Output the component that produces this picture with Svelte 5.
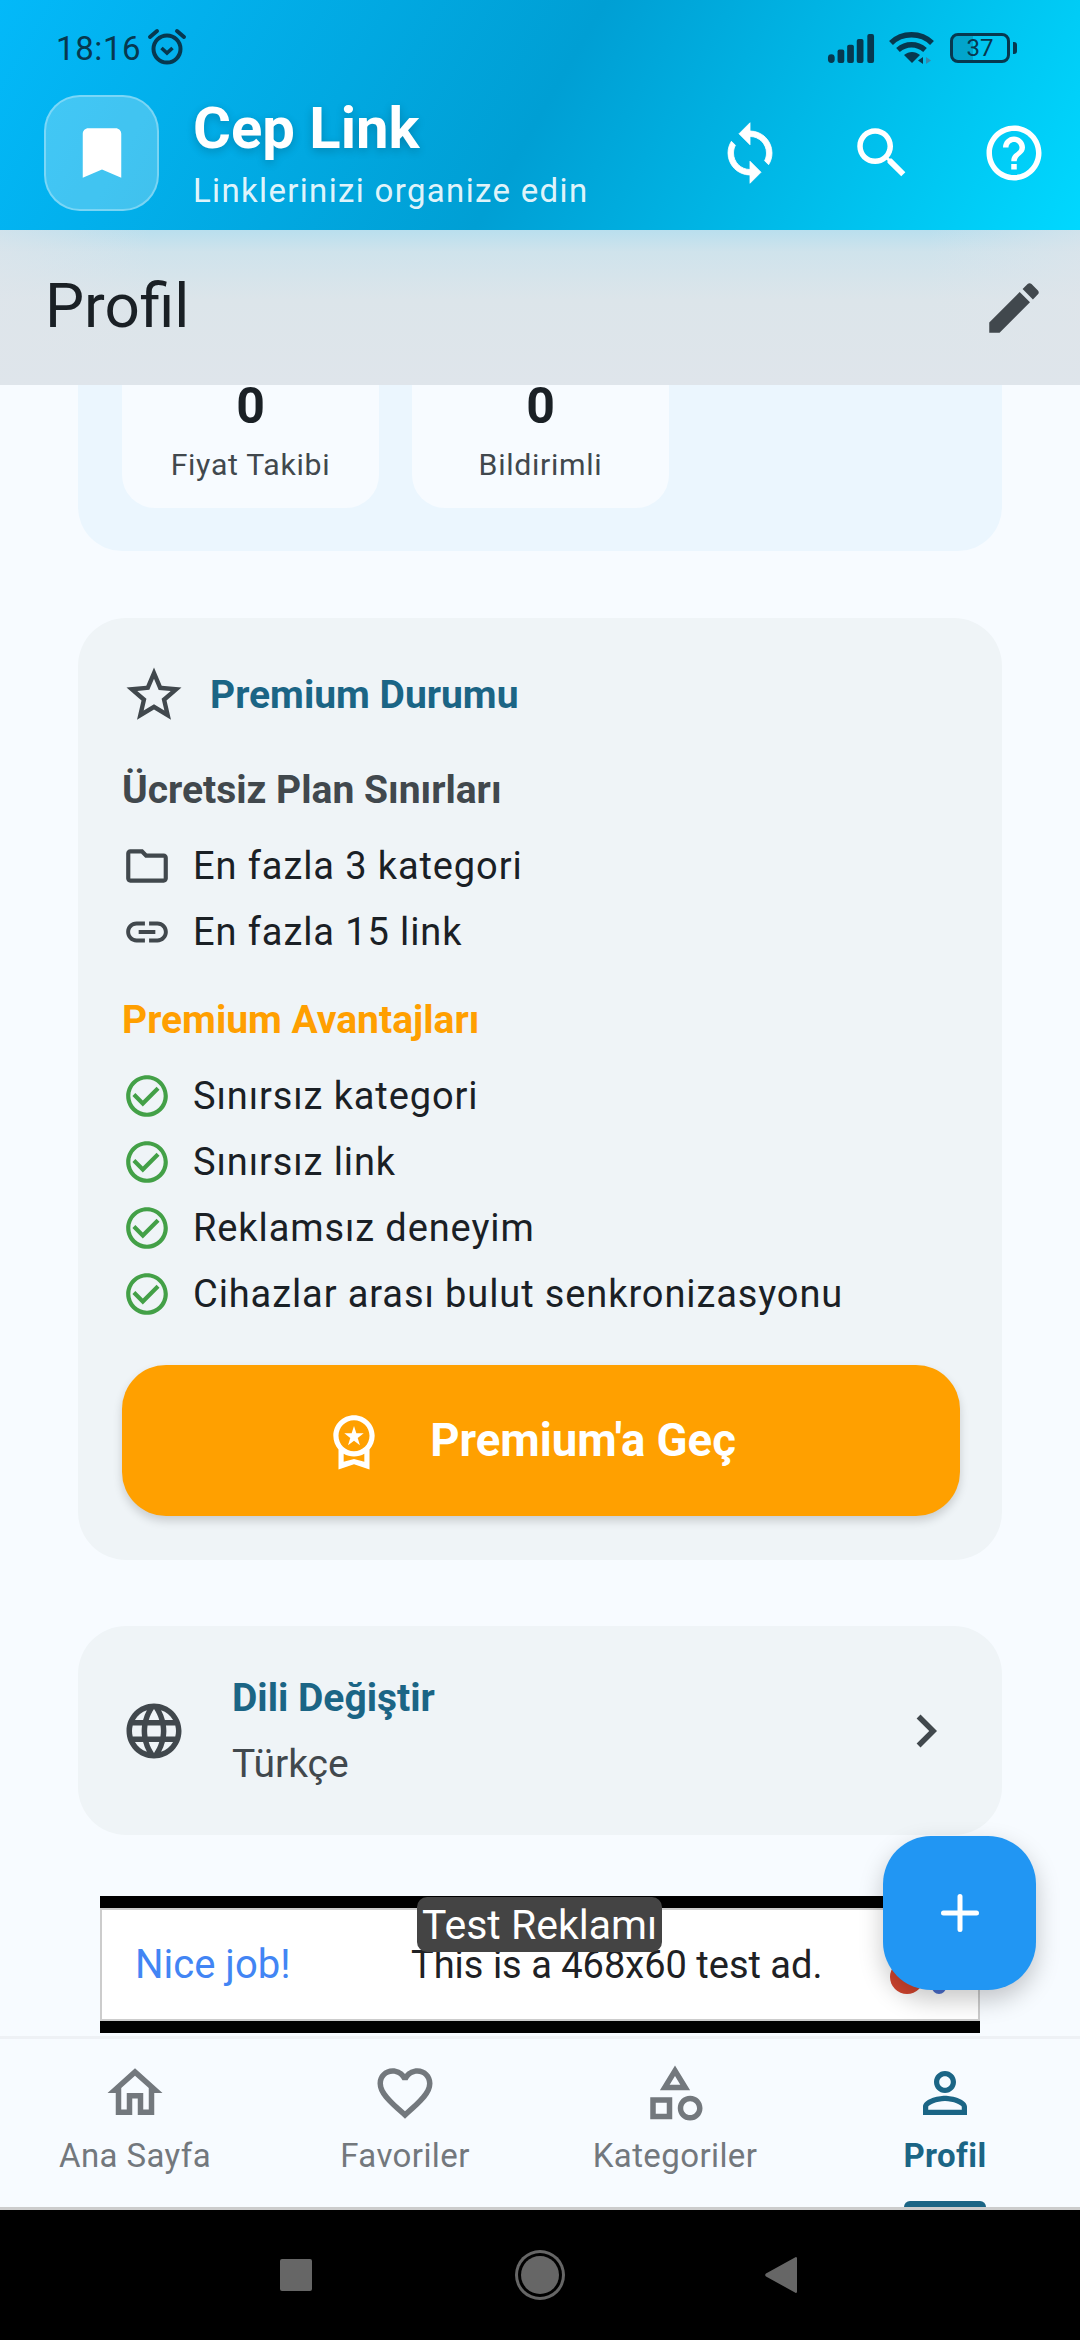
<script>
  const limits = [
    { icon: 'folder', text: 'En fazla 3 kategori' },
    { icon: 'link', text: 'En fazla 15 link' }
  ]
  const perks = ['Sınırsız kategori', 'Sınırsız link', 'Reklamsız deneyim', 'Cihazlar arası bulut senkronizasyonu']
  const stats = [
    { value: 0, label: 'Fiyat Takibi' },
    { value: 0, label: 'Bildirimli' }
  ]

  const paths = {
    folder: 'M9.17 6l2 2H20v10H4V6h5.17M10 4H4c-1.1 0-1.99.9-1.99 2L2 18c0 1.1.9 2 2 2h16c1.1 0 2-.9 2-2V8c0-1.1-.9-2-2-2h-8l-2-2z',
    link: 'M3.9 12c0-1.71 1.39-3.1 3.1-3.1h4V7H7c-2.76 0-5 2.24-5 5s2.24 5 5 5h4v-1.9H7c-1.71 0-3.1-1.39-3.1-3.1zM8 13h8v-2H8v2zm9-6h-4v1.9h4c1.71 0 3.1 1.39 3.1 3.1s-1.39 3.1-3.1 3.1h-4V17h4c2.76 0 5-2.24 5-5s-2.24-5-5-5z',
    check: 'M16.59 7.58L10 14.17l-3.59-3.58L5 12l5 5 8-8zM12 2C6.48 2 2 6.48 2 12s4.48 10 10 10 10-4.48 10-10S17.52 2 12 2zm0 18c-4.42 0-8-3.58-8-8s3.58-8 8-8 8 3.58 8 8-3.58 8-8 8z',
    home: 'M12 5.69l5 4.5V18h-2v-6H9v6H7v-7.81l5-4.5M12 3L2 12h3v8h6v-6h2v6h6v-8h3L12 3z',
    heart: 'M16.5 3c-1.74 0-3.41.81-4.5 2.09C10.91 3.81 9.24 3 7.5 3 4.42 3 2 5.42 2 8.5c0 3.78 3.4 6.86 8.55 11.54L12 21.35l1.45-1.32C18.6 15.36 22 12.28 22 8.5 22 5.42 19.58 3 16.5 3zm-4.4 15.55l-.1.1-.1-.1C7.14 14.24 4 11.39 4 8.5 4 6.5 5.5 5 7.5 5c1.54 0 3.04.99 3.57 2.36h1.87C13.46 5.99 14.96 5 16.5 5c2 0 3.5 1.5 3.5 3.5 0 2.89-3.14 5.74-7.9 10.05z',
    category: 'M12 2l-5.5 9h11L12 2zm0 3.84L13.93 9h-3.87L12 5.84zM17.5 13c-2.49 0-4.5 2.01-4.5 4.5s2.01 4.5 4.5 4.5 4.5-2.01 4.5-4.5-2.01-4.5-4.5-4.5zm0 7c-1.38 0-2.5-1.12-2.5-2.5s1.12-2.5 2.5-2.5 2.5 1.12 2.5 2.5-1.12 2.5-2.5 2.5zM3 21.5h8v-8H3v8zm2-6h4v4H5v-4z',
    person: 'M12 5.9c1.16 0 2.1.94 2.1 2.1s-.94 2.1-2.1 2.1S9.9 9.16 9.9 8s.94-2.1 2.1-2.1m0 9c2.97 0 6.1 1.46 6.1 2.1v1.1H5.9V17c0-.64 3.13-2.1 6.1-2.1M12 4C9.79 4 8 5.79 8 8s1.79 4 4 4 4-1.79 4-4-1.79-4-4-4zm0 9c-2.67 0-8 1.34-8 4v3h16v-3c0-2.66-5.33-4-8-4z',
    sync: 'M12 4V1L8 5l4 4V6c3.31 0 6 2.69 6 6 0 1.01-.25 1.97-.7 2.8l1.46 1.46C19.54 15.03 20 13.57 20 12c0-4.42-3.58-8-8-8zm0 14c-3.31 0-6-2.69-6-6 0-1.01.25-1.97.7-2.8L5.24 7.74C4.46 8.97 4 10.43 4 12c0 4.42 3.58 8 8 8v3l4-4-4-4v3z',
    search: 'M15.5 14h-.79l-.28-.27C15.41 12.59 16 11.11 16 9.5 16 5.91 13.09 3 9.5 3S3 5.91 3 9.5 5.91 16 9.5 16c1.61 0 3.09-.59 4.23-1.57l.27.28v.79l5 4.99L20.49 19l-4.99-5zm-6 0C7.01 14 5 11.99 5 9.5S7.01 5 9.5 5 14 7.01 14 9.5 11.99 14 9.5 14z',
    help: 'M11 18h2v-2h-2v2zm1-16C6.48 2 2 6.48 2 12s4.48 10 10 10 10-4.48 10-10S17.52 2 12 2zm0 18c-4.41 0-8-3.59-8-8s3.59-8 8-8 8 3.59 8 8-3.59 8-8 8zm0-14c-2.21 0-4 1.79-4 4h2c0-1.1.9-2 2-2s2 .9 2 2c0 2-3 1.75-3 5h2c0-2.25 3-2.5 3-5 0-2.21-1.79-4-4-4z',
    edit: 'M3 17.25V21h3.75L17.81 9.94l-3.75-3.75L3 17.25zM20.71 7.04c.39-.39.39-1.02 0-1.41l-2.34-2.34c-.39-.39-1.02-.39-1.41 0l-1.83 1.83 3.75 3.75 1.83-1.83z',
    star: 'M22 9.24l-7.19-.62L12 2 9.19 8.63 2 9.24l5.46 4.73L5.82 21 12 17.27 18.18 21l-1.63-7.03L22 9.24zM12 15.4l-3.76 2.27 1-4.28-3.32-2.88 4.38-.38L12 6.1l1.71 4.04 4.38.38-3.32 2.88 1 4.28L12 15.4z',
    globe: 'M11.99 2C6.47 2 2 6.48 2 12s4.47 10 9.99 10C17.52 22 22 17.52 22 12S17.52 2 11.99 2zm6.93 6h-2.95c-.32-1.25-.78-2.45-1.38-3.56 1.84.63 3.37 1.91 4.33 3.56zM12 4.04c.83 1.2 1.48 2.53 1.91 3.96h-3.82c.43-1.43 1.08-2.76 1.91-3.96zM4.26 14C4.1 13.36 4 12.69 4 12s.1-1.36.26-2h3.38c-.08.66-.14 1.32-.14 2 0 .68.06 1.34.14 2H4.26zm.82 2h2.95c.32 1.25.78 2.45 1.38 3.56-1.84-.63-3.37-1.9-4.33-3.56zm2.95-8H5.08c.96-1.66 2.49-2.93 4.33-3.56C8.81 5.55 8.35 6.75 8.03 8zM12 19.96c-.83-1.2-1.48-2.53-1.91-3.96h3.82c-.43 1.43-1.08 2.76-1.91 3.96zM14.34 14H9.66c-.09-.66-.16-1.32-.16-2 0-.68.07-1.35.16-2h4.68c.09.65.16 1.32.16 2 0 .68-.07 1.34-.16 2zm.25 5.56c.6-1.11 1.06-2.31 1.38-3.56h2.95c-.96 1.65-2.49 2.93-4.33 3.56zM16.36 14c.08-.66.14-1.32.14-2 0-.68-.06-1.34-.14-2h3.38c.16.64.26 1.31.26 2s-.1 1.36-.26 2h-3.38z',
    chevron: 'M10 6L8.59 7.41 13.17 12l-4.58 4.59L10 18l6-6z',
    medal: 'M9.68 13.69L12 11.93l2.31 1.76-.88-2.85L15.75 9h-2.84L12 6.19 11.09 9H8.25l2.31 1.84-.88 2.85zM20 10c0-4.42-3.58-8-8-8s-8 3.58-8 8c0 2.03.76 3.87 2 5.28V23l6-2 6 2v-7.72c1.24-1.41 2-3.25 2-5.28zm-8-6c3.31 0 6 2.69 6 6s-2.69 6-6 6-6-2.69-6-6 2.69-6 6-6zm0 15l-4 1.02v-3.1c1.18.68 2.54 1.08 4 1.08s2.82-.4 4-1.08v3.1L12 19z',
    bookmark: 'M17 3H7c-1.1 0-2 .9-2 2v16l7-3 7 3V5c0-1.1-.9-2-2-2z'
  }

  const tabs = [
    { icon: 'home', label: 'Ana Sayfa' },
    { icon: 'heart', label: 'Favoriler' },
    { icon: 'category', label: 'Kategoriler' },
    { icon: 'person', label: 'Profil', active: true }
  ]
</script>

<div class="screen">
  <header class="top">
    <div class="status">
      <span class="time">18:16</span>
      <svg class="alarm" viewBox="0 0 40 40" width="40" height="40">
        <circle cx="20" cy="22" r="13.5" fill="none" stroke="#07384f" stroke-width="4"/>
        <path d="M14.5 21l5.500 5 5.500-5" fill="none" stroke="#07384f" stroke-width="3.600"/>
        <path d="M3 10l7-6M37 10l-7-6" fill="none" stroke="#07384f" stroke-width="4" stroke-linecap="round"/>
      </svg>
      <span class="spacer"></span>
      <svg viewBox="0 0 50 32" width="48" height="31">
        <g fill="#07384f">
          <rect x="1" y="22" width="7" height="9" rx="3.500"/>
          <rect x="11" y="17" width="7" height="14" rx="2"/>
          <rect x="21" y="12" width="7" height="19" rx="2"/>
          <rect x="31" y="6" width="7" height="25" rx="2"/>
          <rect x="42" y="1" width="7" height="30" rx="2"/>
        </g>
      </svg>
      <svg class="wifi" viewBox="0 0 48 36" width="48" height="36">
        <g fill="none" stroke="#07384f" stroke-width="5.500">
          <path d="M3 13C14 2 33 2 44 13"/>
          <path d="M10 20c8-7 19-7 27 0"/>
        </g>
        <path d="M16 25c5-4 11-4 16 0l-8 8z" fill="#07384f"/>
        <path d="M35 34v-7l-5 3.500z" fill="#07384f"/>
        <path d="M38 27v7l5-3.500z" fill="#3b87a8"/>
      </svg>
      <div class="battery">
        <div class="battery-fill"></div>
        <span>37</span>
      </div>
      <div class="battery-tip"></div>
    </div>

    <div class="brand-row">
      <div class="logo">
        <svg viewBox="0 0 24 24" width="66" height="66"><path d={paths.bookmark} fill="#fff"/></svg>
      </div>
      <div class="brand">
        <h1>Cep Link</h1>
        <p>Linklerinizi organize edin</p>
      </div>
      <button class="icon-btn">
        <svg viewBox="0 0 24 24" width="66" height="66"><path d={paths.sync} fill="#fff" stroke="#fff" stroke-width=".3" stroke-linejoin="round"/></svg>
      </button>
      <button class="icon-btn">
        <svg viewBox="0 0 24 24" width="66" height="66"><path d={paths.search} fill="#fff"/></svg>
      </button>
      <button class="icon-btn">
        <svg viewBox="0 0 24 24" width="66" height="66"><path d={paths.help} fill="#fff"/></svg>
      </button>
    </div>
  </header>

  <div class="app-bar">
    <h2>Profil</h2>
    <svg viewBox="0 0 24 24" width="66" height="66"><path d={paths.edit} fill="#41484d"/></svg>
  </div>

  <main class="content">
    <section class="stats-card">
      <div class="stats">
        {#each stats as s}
          <div class="tile">
            <strong>{s.value}</strong>
            <span>{s.label}</span>
          </div>
        {/each}
      </div>
    </section>

    <section class="card premium">
      <div class="card-head">
        <svg viewBox="0 0 24 24" width="66" height="66"><path d={paths.star} fill="#41484d"/></svg>
        <h3>Premium Durumu</h3>
      </div>

      <h4 class="limits-title">Ücretsiz Plan Sınırları</h4>
      <ul>
        {#each limits as item}
          <li>
            <svg viewBox="0 0 24 24" width="50" height="50"><path d={paths[item.icon]} fill="#41484d"/></svg>
            {item.text}
          </li>
        {/each}
      </ul>

      <h4 class="perks-title">Premium Avantajları</h4>
      <ul>
        {#each perks as perk}
          <li>
            <svg viewBox="0 0 24 24" width="50" height="50"><path d={paths.check} fill="#43a047"/></svg>
            {perk}
          </li>
        {/each}
      </ul>

      <button class="cta">
        <svg viewBox="0 0 24 24" width="62" height="62"><path d={paths.medal} fill="#fff"/></svg>
        Premium'a Geç
      </button>
    </section>

    <section class="card lang">
      <svg viewBox="0 0 24 24" width="66" height="66"><path d={paths.globe} fill="#41484d"/></svg>
      <div class="lang-text">
        <h3>Dili Değiştir</h3>
        <span>Türkçe</span>
      </div>
      <svg viewBox="0 0 24 24" width="66" height="66"><path d={paths.chevron} fill="#41484d"/></svg>
    </section>

    <div class="ad">
      <div class="ad-inner">
        <span class="nice">Nice job!</span>
        <span class="ad-copy">This is a 468x60 test ad.</span>
        <span class="dot red"></span>
        <span class="dot blue"></span>
      </div>
      <span class="test-badge">Test Reklamı</span>
    </div>
  </main>

  <nav class="tabs">
    {#each tabs as tab}
      <div class="tab" class:active={tab.active}>
        <svg viewBox="0 0 24 24" width="66" height="66"><path d={paths[tab.icon]} fill="currentColor"/></svg>
        <span>{tab.label}</span>
        {#if tab.active}<i class="indicator"></i>{/if}
      </div>
    {/each}
  </nav>

  <div class="sys-nav">
    <span class="sys-square"></span>
    <span class="sys-circle"></span>
    <svg viewBox="0 0 32 36" width="32" height="36"><path d="M32 1v34a1 1 0 0 1-1.600.700L1 19.500a2 2 0 0 1 0-3L30.400.300A1 1 0 0 1 32 1z" fill="#666"/></svg>
  </div>

  <button class="fab">
    <svg viewBox="0 0 38 38" width="38" height="38"><path d="M19 2.500v33M2.500 19h33" stroke="#fff" stroke-width="5" stroke-linecap="round"/></svg>
  </button>
</div>

<style>
  :global(body) {
    margin: 0;
    background: #f7fbff;
  }

  .screen {
    position: relative;
    width: 1080px;
    height: 2340px;
    overflow: hidden;
    display: flex;
    flex-direction: column;
    font-family: Roboto, "Noto Sans", sans-serif;
    background: #f7fbff;
    color: #1a2025;
  }

  h1, h2, h3, h4, p, ul {
    margin: 0;
    padding: 0;
  }

  svg {
    display: block;
    flex: none;
  }

  button {
    border: 0;
    padding: 0;
    background: none;
    font-family: inherit;
  }

  .top {
    height: 230px;
    flex: none;
    box-sizing: border-box;
    background: linear-gradient(120deg, #03b9f9 0%, #009fd4 50%, #00d8ff 100%);
  }

  .status {
    height: 87px;
    box-sizing: border-box;
    padding: 9px 63px 0 56px;
    display: flex;
    align-items: center;
    color: #07384f;
  }

  .time {
    font-size: 33px;
    letter-spacing: 0.6px;
  }

  .alarm {
    margin-left: 6px;
    margin-top: -3px;
  }

  .spacer {
    flex: 1;
  }

  .wifi {
    margin: 0 14px 0 13px;
  }

  .battery {
    position: relative;
    width: 60px;
    height: 30px;
    box-sizing: border-box;
    border: 3.500px solid #07384f;
    border-radius: 8px;
    overflow: hidden;
    display: flex;
    align-items: center;
    justify-content: center;
    font-size: 24px;
  }

  .battery-fill {
    position: absolute;
    left: 0;
    top: 0;
    bottom: 0;
    width: 37%;
    background: rgba(7, 56, 79, .22);
  }

  .battery span {
    position: relative;
  }

  .battery-tip {
    width: 4px;
    height: 12px;
    margin-left: 3px;
    border-radius: 0 3px 3px 0;
    background: #07384f;
  }

  .brand-row {
    height: 132px;
    display: flex;
    align-items: center;
    padding-left: 44px;
  }

  .logo {
    width: 115px;
    height: 116px;
    box-sizing: border-box;
    border: 2px solid rgba(255, 255, 255, .3);
    border-radius: 36px;
    background: rgba(255, 255, 255, .25);
    display: flex;
    align-items: center;
    justify-content: center;
  }

  .brand {
    flex: 1;
    margin-left: 34px;
    color: #fff;
  }

  .brand h1 {
    font-size: 58px;
    line-height: 64px;
    font-weight: 700;
    text-shadow: 0 3px 10px rgba(0, 0, 0, .2);
  }

  .brand p {
    margin-top: 12px;
    font-size: 33px;
    line-height: 38px;
    letter-spacing: 1.330px;
    color: rgba(255, 255, 255, .9);
  }

  .icon-btn {
    width: 132px;
    height: 132px;
    display: flex;
    align-items: center;
    justify-content: center;
  }

  .app-bar {
    height: 155px;
    flex: none;
    box-sizing: border-box;
    padding: 0 33px 5px 45px;
    display: flex;
    align-items: center;
    justify-content: space-between;
    background:
      linear-gradient(90deg, rgba(223, 229, 235, .6), transparent 14%, transparent 86%, rgba(223, 229, 235, .6)),
      linear-gradient(180deg, #b9dfee 0%, #cfe3ec 14%, #dce5ea 45%, #dfe5eb 100%);
  }

  .app-bar svg {
    margin-top: 5px;
  }

  .app-bar h2 {
    font-size: 62px;
    font-weight: 400;
    color: #1a2025;
  }

  .content {
    flex: 1;
    min-height: 0;
    overflow: hidden;
    padding: 0 78px;
    display: flex;
    flex-direction: column;
  }

  .stats-card {
    height: 166px;
    flex: none;
    box-sizing: border-box;
    padding: 0 44px;
    background: #ebf6fe;
    border-radius: 0 0 44px 44px;
  }

  .stats {
    display: flex;
    gap: 33px;
  }

  .tile {
    width: 257px;
    height: 123px;
    box-sizing: border-box;
    background: #f7fbff;
    border-radius: 0 0 33px 33px;
    display: flex;
    flex-direction: column;
    align-items: center;
  }

  .tile strong {
    font-size: 50px;
    line-height: 42px;
    font-weight: 700;
  }

  .tile span {
    margin-top: 21px;
    font-size: 30.250px;
    line-height: 34px;
    letter-spacing: 0.7px;
    color: #41484d;
  }

  .card {
    flex: none;
    box-sizing: border-box;
    background: #eff4f7;
    border-radius: 48px;
  }

  .premium {
    margin-top: 67px;
    height: 942px;
    padding: 44px;
  }

  .card-head {
    display: flex;
    align-items: center;
    height: 66px;
    margin-left: -1px;
    gap: 23px;
  }

  h3 {
    font-size: 39px;
    font-weight: 700;
    color: #1b6585;
  }

  h4 {
    font-size: 39px;
    line-height: 44px;
  }

  .limits-title {
    margin-top: 40px;
    font-weight: 700;
    color: #41484d;
  }

  .perks-title {
    margin-top: 41px;
    font-weight: 700;
    color: #ff9f00;
  }

  ul {
    list-style: none;
    margin-top: 29px;
    display: flex;
    flex-direction: column;
    gap: 16px;
  }

  li {
    display: flex;
    align-items: center;
    gap: 21px;
    height: 50px;
    font-size: 38px;
    letter-spacing: 0.9px;
    color: #1a2025;
  }

  .cta {
    margin-top: 46px;
    width: 838px;
    height: 151px;
    padding-right: 23px;
    border-radius: 44px;
    background: #ffa000;
    color: #fff;
    font-size: 45.500px;
    font-weight: 700;
    display: flex;
    align-items: center;
    justify-content: center;
    gap: 45px;
    box-shadow: 0 5px 10px rgba(0, 0, 0, .16);
  }

  .lang {
    margin-top: 66px;
    height: 209px;
    padding: 0 43px 0 43px;
    display: flex;
    align-items: center;
  }

  .lang-text {
    flex: 1;
    margin-left: 45px;
    display: flex;
    flex-direction: column;
    gap: 22px;
  }

  .lang-text span {
    font-size: 39px;
    line-height: 44px;
    color: #41484d;
  }

  .lang-text h3 {
    line-height: 44px;
  }

  .ad {
    position: relative;
    margin: 61px 22px 0;
    flex: none;
    height: 137px;
    box-sizing: border-box;
    padding: 12px 0;
    background: #000;
  }

  .ad-inner {
    position: relative;
    height: 113px;
    box-sizing: border-box;
    border: 2px solid #ccc;
    background: #fff;
    display: flex;
    align-items: center;
    padding-left: 33px;
    overflow: hidden;
  }

  .nice {
    width: 276px;
    font-size: 40px;
    color: #4285f4;
  }

  .ad-copy {
    font-size: 38px;
    color: #202124;
  }

  .dot {
    position: absolute;
    border-radius: 50%;
  }

  .red {
    left: 788px;
    top: 50px;
    width: 34px;
    height: 34px;
    background: #d2452f;
  }

  .blue {
    left: 830px;
    top: 70px;
    width: 14px;
    height: 14px;
    background: #4a6fd0;
  }

  .test-badge {
    position: absolute;
    left: 317px;
    top: 1px;
    width: 245px;
    height: 55px;
    border-radius: 10px;
    background: #444;
    color: #fff;
    font-size: 41px;
    line-height: 56px;
    text-align: center;
  }

  .tabs {
    flex: none;
    height: 174px;
    box-sizing: border-box;
    border-top: 3px solid #eef1f5;
    border-bottom: 3px solid #ccc;
    background: #f7fbff;
    display: grid;
    grid-template-columns: repeat(4, 1fr);
  }

  .tab {
    position: relative;
    display: flex;
    flex-direction: column;
    align-items: center;
    padding-top: 21px;
    color: #73787d;
    font-size: 33px;
    line-height: 40px;
    letter-spacing: 0.4px;
  }

  .tab span {
    margin-top: 10px;
  }

  .tab.active {
    color: #1b6585;
    font-weight: 700;
  }

  .indicator {
    position: absolute;
    left: 50%;
    bottom: 0;
    width: 82px;
    height: 6px;
    margin-left: -41px;
    border-radius: 10px 10px 0 0;
    background: #1b6585;
  }

  .sys-nav {
    flex: none;
    height: 130px;
    background: #000;
    display: flex;
    align-items: center;
    padding: 0 0 0 280px;
    box-sizing: border-box;
  }

  .sys-square {
    width: 32px;
    height: 32px;
    border-radius: 2px;
    background: #666;
  }

  .sys-circle {
    width: 38px;
    height: 38px;
    margin-left: 209px;
    border-radius: 50%;
    background: #666;
    box-shadow: 0 0 0 3px #000, 0 0 0 6px #666;
  }

  .sys-nav svg {
    margin-left: 206px;
  }

  .fab {
    position: absolute;
    left: 883px;
    top: 1836px;
    width: 153px;
    height: 154px;
    border-radius: 48px;
    background: #2196f3;
    box-shadow: 0 10px 24px rgba(0, 0, 0, .22);
    display: flex;
    align-items: center;
    justify-content: center;
  }
</style>
